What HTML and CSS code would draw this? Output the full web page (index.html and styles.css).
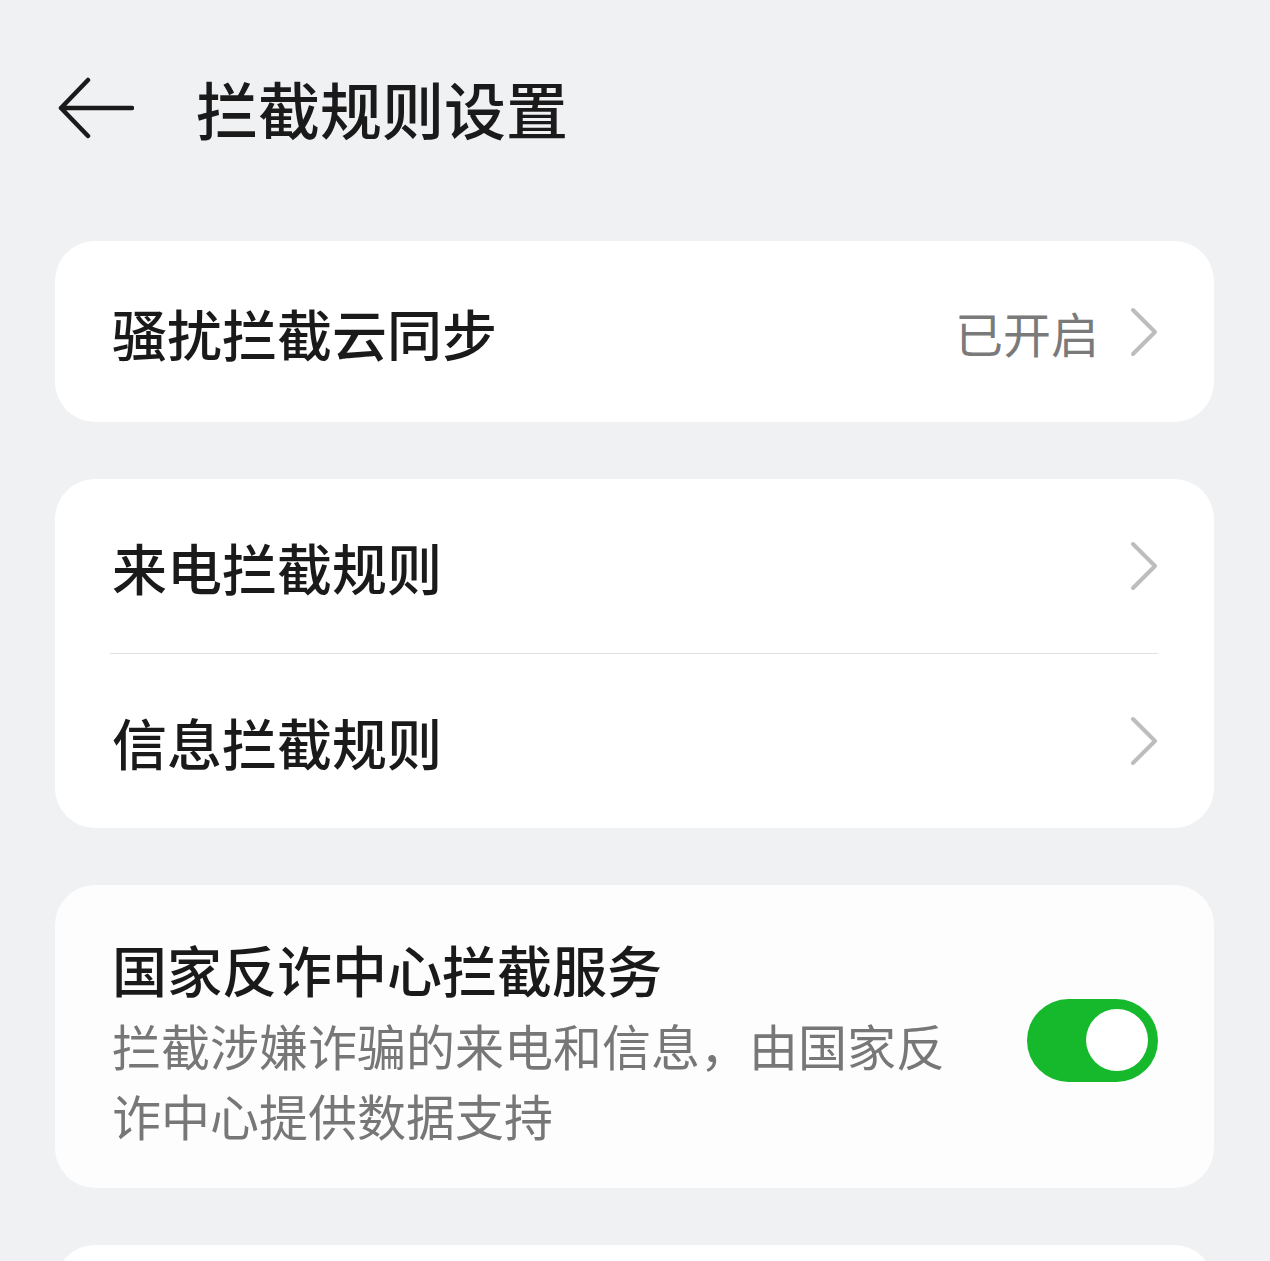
FILE: index.html
```html
<!DOCTYPE html>
<html lang="zh-CN">
<head>
    <meta charset="UTF-8">
    <meta name="viewport" content="width=device-width, initial-scale=1.0">
    <title>拦截规则设置</title>
    <link rel="stylesheet" href="styles.css">
</head>
<body>
    <!-- 顶部标题栏 -->
    <div class="header">
        <svg class="back" width="76" height="64" viewBox="0 0 76 64">
            <path d="M30 4 L3 32 L30 60 M3 32 H74" fill="none" stroke="#1a1a1a" stroke-width="4.5" stroke-linecap="round" stroke-linejoin="round"/>
        </svg>
        <h1 class="title">拦截规则设置</h1>
    </div>

    <div class="card card-single">
        <div class="row">
            <span class="label">骚扰拦截云同步</span>
            <span class="value">已开启</span>
            <svg class="chevron" width="28" height="50" viewBox="0 0 28 50">
                <polyline points="3,3 25,25 3,47" fill="none" stroke="#bdbdbd" stroke-width="4" stroke-linecap="round" stroke-linejoin="round"/>
            </svg>
        </div>
    </div>

    <div class="card">
        <div class="row row-split">
            <span class="label">来电拦截规则</span>
            <svg class="chevron" width="28" height="50" viewBox="0 0 28 50">
                <polyline points="3,3 25,25 3,47" fill="none" stroke="#bdbdbd" stroke-width="4" stroke-linecap="round" stroke-linejoin="round"/>
            </svg>
        </div>
        <div class="divider"></div>
        <div class="row row-split">
            <span class="label">信息拦截规则</span>
            <svg class="chevron" width="28" height="50" viewBox="0 0 28 50">
                <polyline points="3,3 25,25 3,47" fill="none" stroke="#bdbdbd" stroke-width="4" stroke-linecap="round" stroke-linejoin="round"/>
            </svg>
        </div>
    </div>

    <div class="card card-switch">
        <div class="switch-text">
            <div class="label">国家反诈中心拦截服务</div>
            <div class="desc">拦截涉嫌诈骗的来电和信息，由国家反诈中心提供数据支持</div>
        </div>
        <div class="toggle on"><div class="knob"></div></div>
    </div>

    <div class="card card-next"></div>
</body>
</html>
```

FILE: styles.css
```css
body {
    margin: 0;
    background-color: #f0f1f3;
    font-family: "Noto Sans CJK SC", "Noto Sans", sans-serif;
    color: #1a1a1a;
}
.header {
    display: flex;
    align-items: center;
    height: 120px;
    padding: 48px 0 0 58px;
    margin-bottom: 73px;
}
.back {
    display: block;
    margin-right: 62px;
}
.title {
    margin: 0;
    font-size: 62px;
    font-weight: 500;
    line-height: 80px;
    letter-spacing: 0;
}
.card {
    margin: 0 56px 57px 55px;
    background-color: #ffffff;
    border-radius: 40px;
    padding: 0 56px 0 57px;
}
.row {
    display: flex;
    align-items: center;
}
.card-single .row {
    height: 181px;
}
.row-split {
    height: 174px;
}
.label {
    flex: 1;
    font-size: 55px;
    font-weight: 500;
    line-height: 76px;
}
.value {
    font-size: 48px;
    color: #7a7a7a;
    margin-right: 31px;
}
.chevron {
    display: block;
}
.divider {
    height: 1px;
    background-color: #e2e2e2;
    margin-left: -2px;
}
.card-switch {
    display: flex;
    align-items: center;
    justify-content: space-between;
    padding-top: 45px;
    padding-bottom: 38px;
    background-color: #fdfdfd;
}
.switch-text .label {
    flex: none;
}
.desc {
    max-width: 850px;
    margin-top: 4px;
    font-size: 49px;
    line-height: 70px;
    color: #777777;
}
.toggle {
    width: 131px;
    height: 83px;
    border-radius: 42px;
    background-color: #c9c9c9;
    display: flex;
    align-items: center;
    padding: 0 10px;
    box-sizing: border-box;
}
.toggle.on {
    background-color: #17b92c;
    justify-content: flex-end;
}
.knob {
    width: 62px;
    height: 62px;
    border-radius: 50%;
    background-color: #ffffff;
}
.card-next {
    height: 120px;
    margin-bottom: 0;
}
```
